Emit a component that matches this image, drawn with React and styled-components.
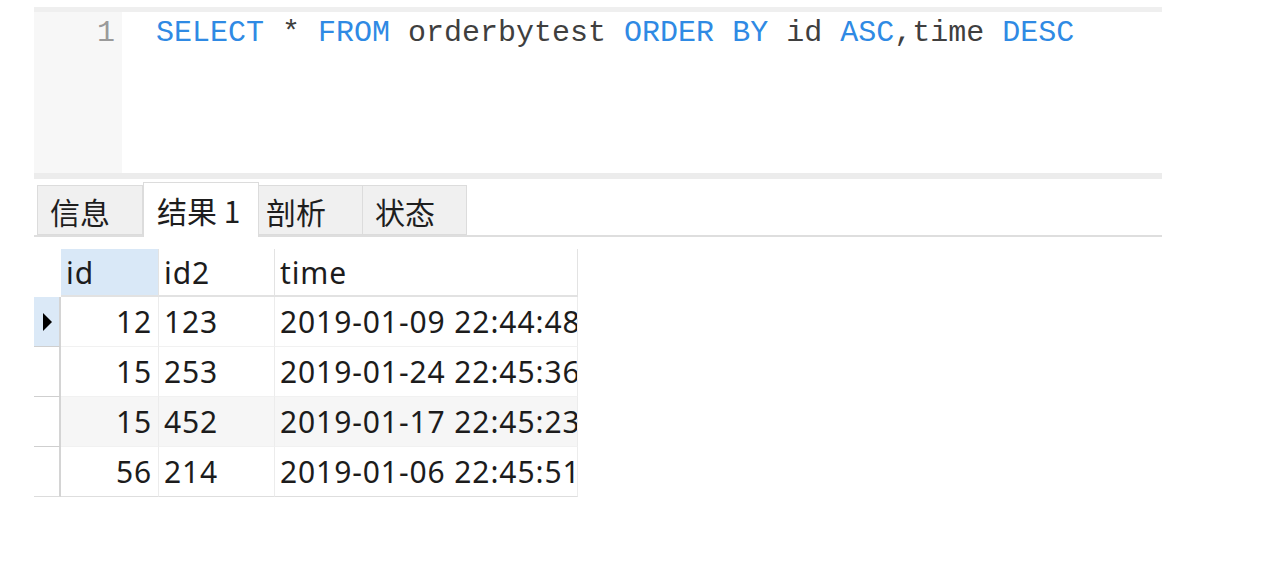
import React from "react";
import styled, { createGlobalStyle } from "styled-components";

const Global = createGlobalStyle`
  html, body { margin: 0; padding: 0; background: #ffffff; }
  body { font-family: "Noto Sans", "Noto Sans CJK SC", sans-serif; }
`;

const Page = styled.div`
  width: 1128px;
  padding: 7px 0 0 34px;
`;

const Editor = styled.div`
  display: flex;
  height: 161px;
  border-top: 5px solid #efefef;
  border-bottom: 6px solid #ececec;
`;

const Gutter = styled.div`
  width: 88px;
  flex: none;
  background: #f7f7f7;
  box-sizing: border-box;
  padding: 3px 7px 0 0;
  text-align: right;
  font-family: "Liberation Mono", monospace;
  font-size: 30px;
  line-height: 36px;
  color: #9a9a9a;
`;

const Code = styled.div`
  flex: 1;
  background: #fff;
  padding: 3px 0 0 34px;
  font-family: "Liberation Mono", monospace;
  font-size: 30px;
  line-height: 36px;
  color: #3f3f3f;
  white-space: pre;
`;

const Kw = styled.span`
  color: #2f8ae4;
`;

const TabBar = styled.div`
  display: flex;
  align-items: flex-end;
  height: 56px;
  padding-left: 3px;
  border-bottom: 2px solid #dedede;
`;

const Tab = styled.div`
  box-sizing: border-box;
  width: ${(p) => p.$w}px;
  height: ${(p) => (p.$active ? 55 : 50)}px;
  margin-bottom: ${(p) => (p.$active ? -2 : 0)}px;
  padding-left: ${(p) => p.$pl}px;
  display: flex;
  align-items: center;
  background: ${(p) => (p.$active ? "#ffffff" : "#f0f0f0")};
  border: 1px solid #dcdcdc;
  border-bottom: ${(p) => (p.$active ? "none" : "1px solid #dcdcdc")};
  border-left: ${(p) => (p.$first || p.$active ? "1px solid #dcdcdc" : "none")};
  font-family: "Noto Sans CJK SC", sans-serif;
  font-size: 30px;
  color: #1e1e1e;
  padding-top: ${(p) => (p.$active ? 0 : 2)}px;
`;

const Grid = styled.div`
  margin-top: 12px;
  display: grid;
  grid-template-columns: 27px 98px 116px 303px;
  grid-auto-rows: 50px;
  grid-template-rows: 48px;
  width: 544px;
  font-family: "Noto Sans", "Noto Sans CJK SC", sans-serif;
  font-size: 30px;
  letter-spacing: 0.9px;
  color: #1c1c1c;
`;

const Corner = styled.div`
  background: #fff;
`;

const Head = styled.div`
  display: flex;
  align-items: center;
  padding-left: 5px;
  background: ${(p) => (p.$sel ? "#d9e8f7" : "#ffffff")};
  border-right: 1px solid #e3e3e3;
  border-bottom: 2px solid #e2e2e2;
  overflow: hidden;
  white-space: nowrap;
`;

const Indicator = styled.div`
  display: flex;
  align-items: center;
  justify-content: flex-start;
  padding-left: 9px;
  background: ${(p) => (p.$sel ? "#dbe9f7" : "#ffffff")};
  border-right: 2px solid #d4d4d4;
  border-bottom: 1px solid ${(p) => (p.$last ? "#dcdcdc" : "#cfcfcf")};
`;

const Arrow = styled.span`
  width: 0;
  height: 0;
  border-top: 9px solid transparent;
  border-bottom: 9px solid transparent;
  border-left: 9px solid #000;
`;

const Cell = styled.div`
  display: flex;
  align-items: center;
  justify-content: ${(p) => (p.$right ? "flex-end" : "flex-start")};
  padding: ${(p) => (p.$right ? "0 6px 0 0" : "0 0 0 5px")};
  background: ${(p) => (p.$alt ? "#f6f6f6" : "#ffffff")};
  border-right: 1px solid #ececec;
  border-bottom: 1px solid ${(p) => (p.$last ? "#dedede" : "#f1f1f1")};
  overflow: hidden;
  white-space: nowrap;
`;

const rows = [
  ["12", "123", "2019-01-09 22:44:48"],
  ["15", "253", "2019-01-24 22:45:36"],
  ["15", "452", "2019-01-17 22:45:23"],
  ["56", "214", "2019-01-06 22:45:51"],
];

const tabs = [
  { label: "信息", w: 106, pl: 12 },
  { label: "结果 1", w: 116, pl: 13, active: true },
  { label: "剖析", w: 104, pl: 7 },
  { label: "状态", w: 104, pl: 12 },
];

export default function App() {
  return (
    <>
      <Global />
      <Page>
        <Editor>
          <Gutter>1</Gutter>
          <Code>
            <Kw>SELECT</Kw> * <Kw>FROM</Kw> orderbytest <Kw>ORDER</Kw> <Kw>BY</Kw> id <Kw>ASC</Kw>,time <Kw>DESC</Kw>
          </Code>
        </Editor>
        <TabBar>
          {tabs.map((t, i) => (
            <Tab key={t.label} $w={t.w} $pl={t.pl} $active={t.active} $first={i === 0}>
              {t.label}
            </Tab>
          ))}
        </TabBar>
        <Grid>
          <Corner />
          <Head $sel>id</Head>
          <Head>id2</Head>
          <Head>time</Head>
          {rows.map((r, i) => {
            const last = i === rows.length - 1;
            const alt = i === 2;
            return (
              <React.Fragment key={i}>
                <Indicator $sel={i === 0} $last={last}>
                  {i === 0 && <Arrow />}
                </Indicator>
                <Cell $right $alt={alt} $last={last}>{r[0]}</Cell>
                <Cell $alt={alt} $last={last}>{r[1]}</Cell>
                <Cell $alt={alt} $last={last}>{r[2]}</Cell>
              </React.Fragment>
            );
          })}
        </Grid>
      </Page>
    </>
  );
}
